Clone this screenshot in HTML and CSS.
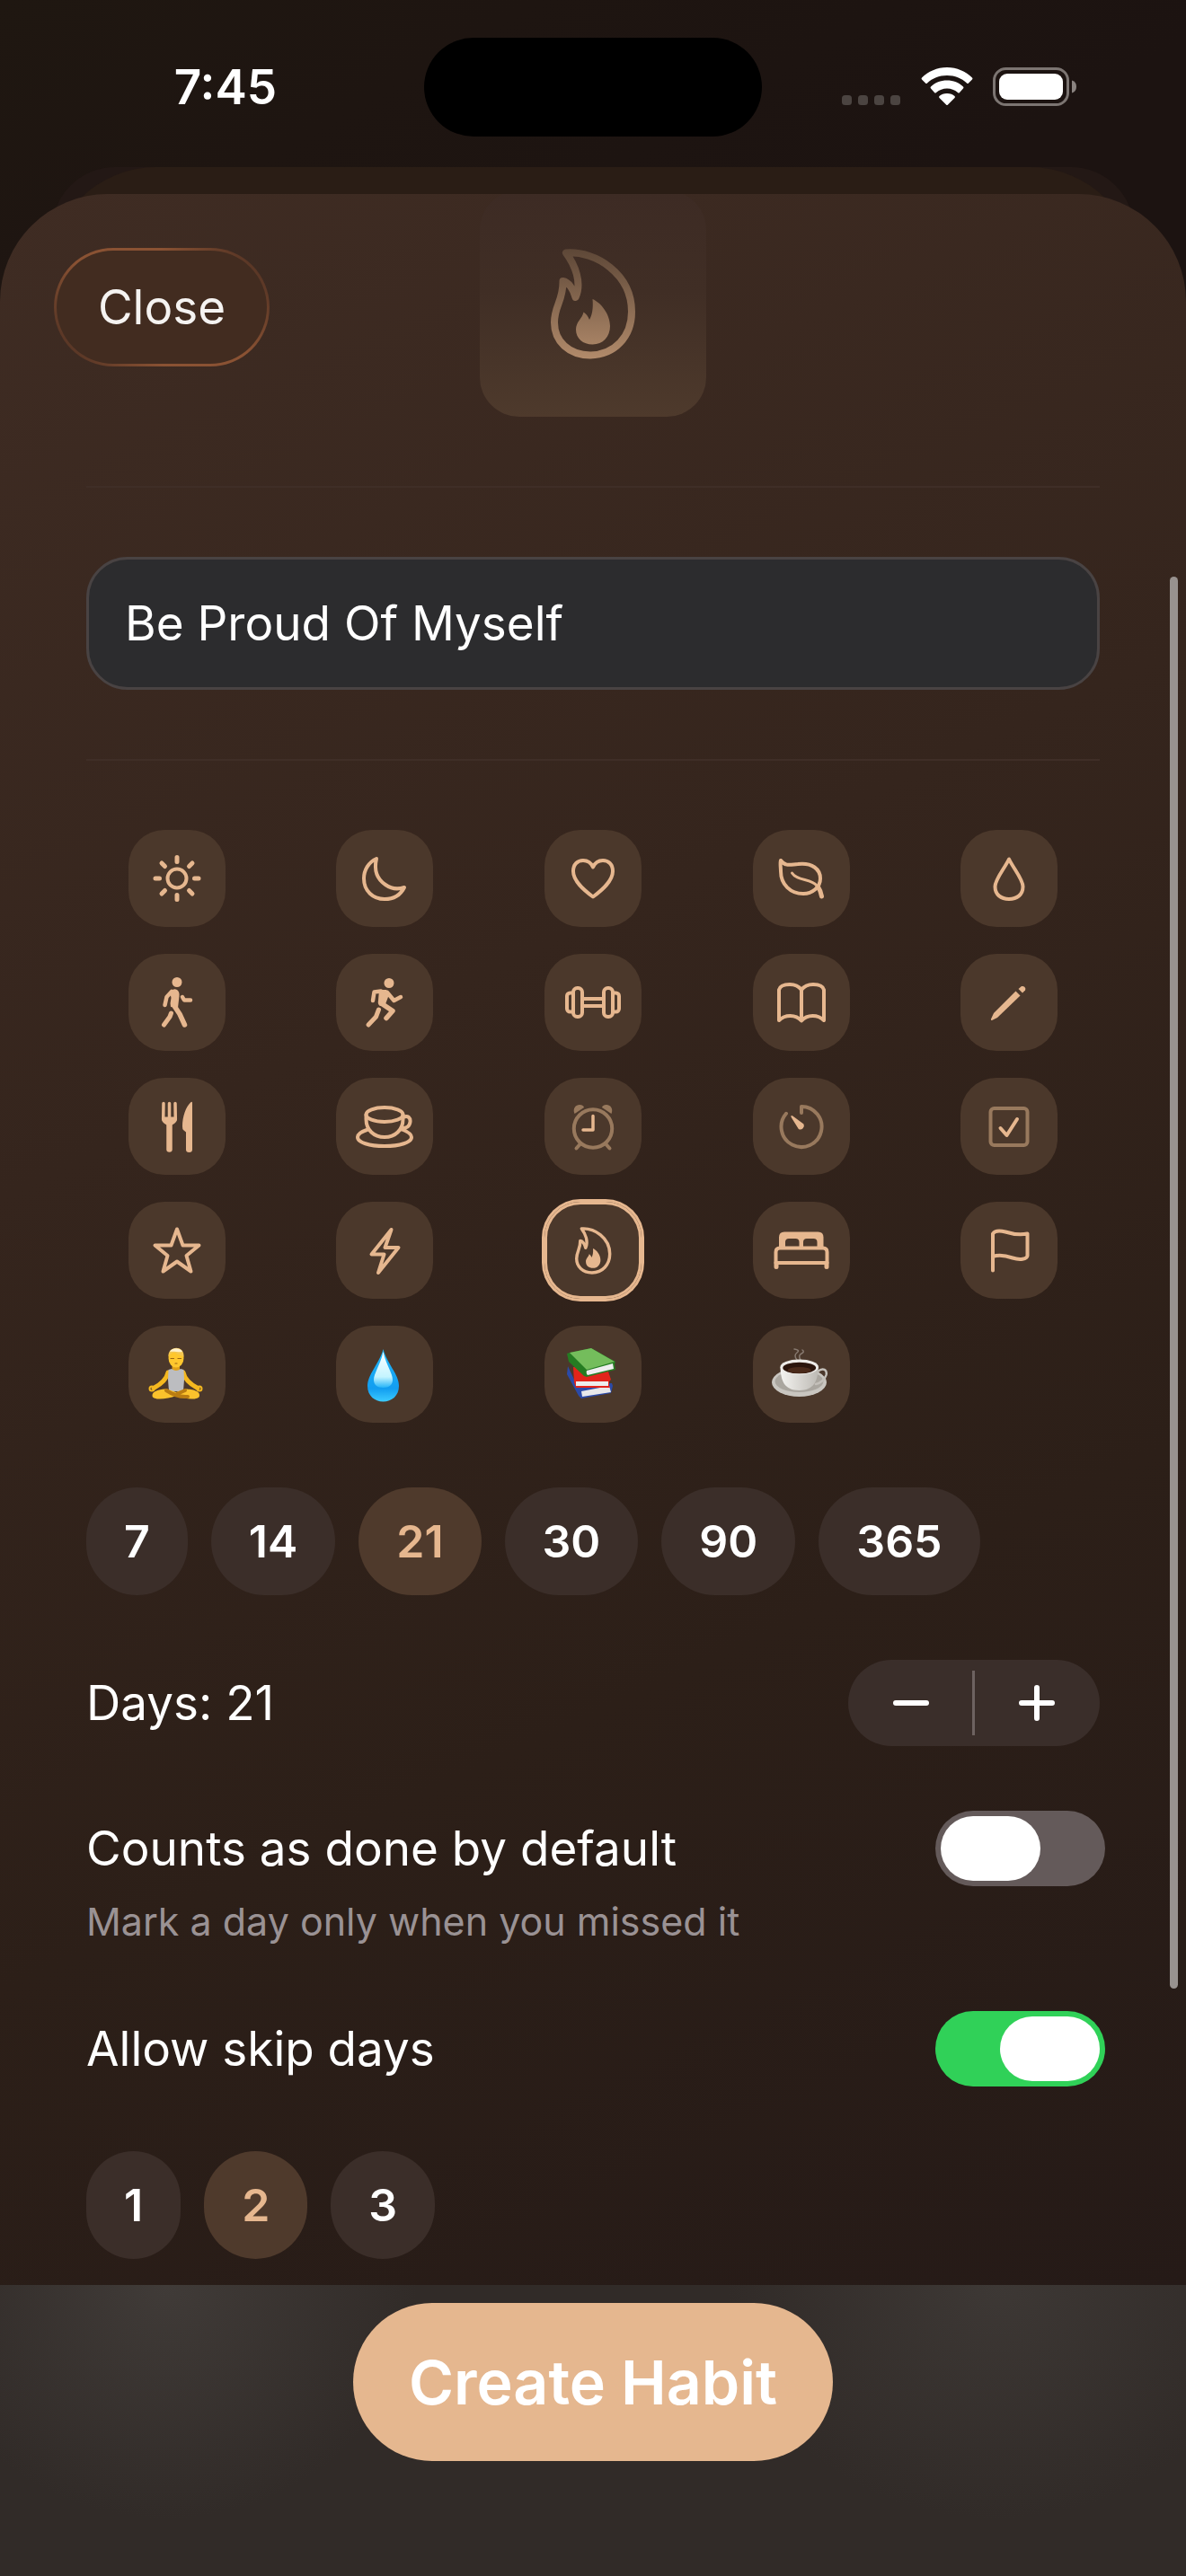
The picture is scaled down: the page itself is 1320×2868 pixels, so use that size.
FILE: index.html
```
<!DOCTYPE html>
<html lang="en">
<head>
  <meta charset="UTF-8">
  <meta name="viewport" content="width=device-width, initial-scale=1.0">
  <title>New Habit</title>
  <link rel="stylesheet" href="styles.css">
</head>
<body>
  <header class="status-bar">
    <div class="status-time">7:45</div>
    <div class="island"></div>
    <div class="status-icons">
      <svg width="66" height="44" viewBox="0 0 66 44" fill="#4b4441">
        <rect x="0" y="31" width="11" height="11" rx="3.500"/>
        <rect x="18" y="31" width="11" height="11" rx="3.500"/>
        <rect x="36" y="31" width="11" height="11" rx="3.500"/>
        <rect x="54" y="31" width="11" height="11" rx="3.500"/>
      </svg>
      <svg width="58" height="44" viewBox="0 0 58 44" fill="#fff">
        <path d="M29 0C18 0 8 4.500 1 11.500Q0 12.500 1 13.500L5 17.500Q6 18.500 7 17.500C13 12 20 9 29 9S45 12 51 17.500Q52 18.500 53 17.500L57 13.500Q58 12.500 57 11.500C50 4.500 40 0 29 0Z"/>
        <path d="M29 14.500C22 14.500 15.500 17 11 21.500Q10 22.500 11 23.500L15 28Q16 29 17 28C20.500 25 24.500 23.500 29 23.500S37.500 25 41 28Q42 29 43 28L47 23.500Q48 22.500 47 21.500C42.500 17 36 14.500 29 14.500Z"/>
        <path d="M29 29C25.500 29 22.500 30 20.500 32Q19.500 33 20.500 34L28 41.500Q29 42.500 30 41.500L37.500 34Q38.500 33 37.500 32C35.500 30 32.500 29 29 29Z"/>
      </svg>
      <svg width="94" height="44" viewBox="0 0 94 44">
        <rect x="1.500" y="1.500" width="82" height="40" rx="13" fill="none" stroke="#7c7572" stroke-width="3"/>
        <rect x="7" y="7" width="71" height="29" rx="9" fill="#fff"/>
        <path d="M88 14.500Q93 16 93 21.500T88 28.500Z" fill="#8a8380"/>
      </svg>
    </div>
  </header>

  <div class="back-sheets">
    <div class="back-sheet far"></div>
    <div class="back-sheet"></div>
  </div>

  <main class="sheet">
    <button class="close-btn" type="button">Close</button>
    <div class="scrollbar"></div>

    <div class="hero">
      <svg class="hero-icon" viewBox="0 0 94 123">
        <defs>
          <linearGradient id="fade" gradientUnits="userSpaceOnUse" x1="0" y1="0" x2="0" y2="123">
            <stop offset="0" stop-color="#5d4737"/>
            <stop offset="1" stop-color="#b28b6b"/>
          </linearGradient>
        </defs>
        <path d="M17 4.500C50 2 90 28 90 70C90 98 71 118 44 118.500C20 118 4 103 4 82C4 63 14 58 13.500 36C20 37 25 45 27.500 54C35 38 27 18 17 4.500Z" fill="none" stroke="url(#fade)" stroke-width="8" stroke-linejoin="round"/>
        <path d="M46.500 56C56 60 66 73 66 86C66 98 58 106.500 46.500 106.500C36 106.500 28 100 28 90C28 81 35 78 36.500 70.500C39 72 41.500 75 43 79C46 74 47.500 66 46.500 56Z" fill="url(#fade)"/>
      </svg>
    </div>

    <form class="form">
      <hr class="divider">
      <input class="name-input" type="text" value="Be Proud Of Myself" aria-label="Habit name">
      <hr class="divider">

      <div class="icon-grid">
        <button class="icon-btn" type="button" aria-label="Sun">
          <svg viewBox="0 0 108 108">
            <circle cx="54" cy="54" r="10.500"/>
            <path stroke-width="5" d="M54 30.500V35.500M54 72.500V77.500M30 54H34.500M73.500 54H78M37 37L40.500 40.500M67.500 67.500L71 71M71 37L67.500 40.500M40.500 67.500L37 71"/>
          </svg>
        </button>
        <button class="icon-btn" type="button" aria-label="Moon">
          <svg viewBox="0 0 108 108"><path d="M45 32C36 36 31 45 31 54C31 68 41 77 54 77C64 77 72 72 76 64C70 66 62 66 55 61C46 55 42 45 45 32Z"/></svg>
        </button>
        <button class="icon-btn" type="button" aria-label="Heart">
          <svg viewBox="0 0 108 108"><path d="M54 74.500C44 67 32 57 32 46C32 38 37 34 43 34C48 34 52 37 54 41.500C56 37 60 34 65 34C71 34 76 38 76 46C76 57 64 67 54 74.500Z"/></svg>
        </button>
        <button class="icon-btn" type="button" aria-label="Leaf">
          <svg viewBox="0 0 108 108">
            <path d="M31 34C36 41 42 38.500 50 38C66 36 75 44 75 54C75 64 66 71 56 71C42 71 31 61 31 46C31 42 30 37 31 34Z"/>
            <path stroke-width="3" d="M43.500 48C49 57 65 54 71 62"/>
            <path stroke-width="5" d="M72.500 63.500C75 67 76 71 76.500 74"/>
          </svg>
        </button>
        <button class="icon-btn" type="button" aria-label="Drop">
          <svg viewBox="0 0 108 108"><path d="M54 32.500C49 43 38.500 55 38.500 63C38.500 72 45 77 54 77C63 77 69.500 72 69.500 63C69.500 55 59 43 54 32.500Z"/></svg>
        </button>

        <button class="icon-btn" type="button" aria-label="Walk">
          <svg viewBox="0 0 108 108">
            <circle class="solid" cx="54" cy="31.500" r="5.500"/>
            <path class="solid" d="M46 42Q50 38 54 40Q57 42 56.500 47L55 60L47 59Q46 55 47.500 49Z"/>
            <path stroke-width="4.500" d="M48 42L42.500 48L40.500 57M60 48L62 51.500H69"/>
            <path stroke-width="5.500" d="M51 58L57 67L62.500 79"/>
            <path stroke-width="5" d="M47.500 66L46 70L39.500 79"/>
          </svg>
        </button>
        <button class="icon-btn" type="button" aria-label="Run">
          <svg viewBox="0 0 108 108">
            <circle class="solid" cx="59" cy="32.500" r="5.500"/>
            <path class="solid" d="M48 40H56Q60 43 58 48L55 56L49 58Q46 56 47 52Z"/>
            <path stroke-width="4.500" d="M50 41.500L42.500 42.500L41 52M57 43L64.500 52L72 48"/>
            <path stroke-width="5.500" d="M51 55.500L63 63.500L56 71.500"/>
            <path stroke-width="5" d="M47.500 62L44.500 70L36 79"/>
          </svg>
        </button>
        <button class="icon-btn" type="button" aria-label="Dumbbell">
          <svg viewBox="0 0 108 108">
            <rect x="32" y="38" width="10" height="32" rx="4.500"/>
            <rect x="66" y="38" width="10" height="32" rx="4.500"/>
            <path d="M32 43.500H28.500A3.500 3.500 0 0 0 25 47V61A3.500 3.500 0 0 0 28.500 64.500H32M76 43.500H79.500A3.500 3.500 0 0 1 83 47V61A3.500 3.500 0 0 1 79.500 64.500H76M42 50H66M42 58H66"/>
          </svg>
        </button>
        <button class="icon-btn" type="button" aria-label="Book">
          <svg viewBox="0 0 108 108"><path d="M54 40C51 36 46 34 41 34C35 34 30 36 29 40V74C32 71 37 69 41.500 69C46 69 51 71 54 74.500C57 71 62 69 66.500 69C71 69 76 71 79 74V40C78 36 73 34 67 34C62 34 57 36 54 40V74"/></svg>
        </button>
        <button class="icon-btn" type="button" aria-label="Pencil">
          <svg viewBox="0 0 108 108">
            <path class="solid" d="M34 72.500L37 66L61.500 41.500L66.500 46.500L41 71L35 74Q33.500 74 34 72.500Z"/>
            <path class="solid" d="M64.500 39L68 36Q70 35.500 71.500 37T72 40.500L69 43.500Z"/>
          </svg>
        </button>

        <button class="icon-btn" type="button" aria-label="Meal">
          <svg viewBox="0 0 108 108">
            <path stroke-width="3.500" d="M39 28.500L38.700 46M45.500 28.500V46M52 28.500L52.300 46"/>
            <path class="solid" d="M37 43.500H54V47Q53 50 48.500 52.500H42.500Q38 50 37 47Z"/>
            <path stroke-width="6.500" d="M45.500 52V79.500"/>
            <path class="solid" d="M69.500 27Q71 26 71 28V80Q71 83 67.500 83T64 80V60.500L61 58Q60 57 60 54C60 43 64 32 69.500 27Z"/>
          </svg>
        </button>
        <button class="icon-btn" type="button" aria-label="Tea">
          <svg viewBox="0 0 108 108">
            <ellipse cx="54" cy="41" rx="20.500" ry="8"/>
            <path d="M33.500 41V46C33.500 58 42 66 54 66C66 66 74.500 58 74.500 46V41M75 44C80 41 83 45 82.500 49C82 54 78 56.500 72.500 56M35.500 57.500C28 60 24 62.500 24 66C24 72 37 76 54 76C71 76 84 72 84 66C84 62.500 80 60 72.500 57"/>
          </svg>
        </button>
        <button class="icon-btn" type="button" aria-label="Alarm">
          <svg viewBox="0 0 108 108">
            <g class="dim">
              <circle cx="54" cy="56.500" r="21.200"/>
              <path d="M39.500 74L35.500 78.500M68.500 74L72.500 78.500"/>
              <path class="dim-solid" d="M33.500 40C31 34 35 30 39 30C42 30 44 31.500 44 33ZM74.500 40C77 34 73 30 69 30C66 30 64 31.500 64 33Z"/>
            </g>
            <path stroke-width="3.500" d="M54 42.500V58H43"/>
          </svg>
        </button>
        <button class="icon-btn" type="button" aria-label="Timer">
          <svg viewBox="0 0 108 108">
            <path class="dim" d="M54 39V32A22.500 22.500 0 1 1 37 39.800"/>
            <path class="solid" d="M42.500 42.200Q43.500 41.800 45 43L56.500 51.500A4.200 4.200 0 0 1 50.800 57L43 44.500Q42 43 42.500 42.200Z"/>
          </svg>
        </button>
        <button class="icon-btn" type="button" aria-label="Checkbox">
          <svg viewBox="0 0 108 108">
            <rect class="dim" x="33.500" y="34" width="41" height="41" rx="4"/>
            <path d="M44.500 56L51.500 64L63 46"/>
          </svg>
        </button>

        <button class="icon-btn" type="button" aria-label="Star">
          <svg viewBox="0 0 108 108"><path d="M54 30.500L60.500 48.500H78.500L64.500 60L69.500 77.500L54 66.500L38.500 77.500L43.500 60L29.500 48.500H47.500Z"/></svg>
        </button>
        <button class="icon-btn" type="button" aria-label="Bolt">
          <svg viewBox="0 0 108 108"><path d="M61.500 31L39.500 58.500H53.500L47 79L69.500 51H54.500Z"/></svg>
        </button>
        <button class="icon-btn selected" type="button" aria-label="Flame" aria-pressed="true">
          <svg viewBox="0 0 108 108">
            <g transform="translate(34 28) scale(.43)">
              <path stroke-width="8" d="M17 4.500C50 2 90 28 90 70C90 98 71 118 44 118.500C20 118 4 103 4 82C4 63 14 58 13.500 36C20 37 25 45 27.500 54C35 38 27 18 17 4.500Z"/>
              <path class="solid" d="M46.500 56C56 60 66 73 66 86C66 98 58 106.500 46.500 106.500C36 106.500 28 100 28 90C28 81 35 78 36.500 70.500C39 72 41.500 75 43 79C46 74 47.500 66 46.500 56Z"/>
            </g>
          </svg>
        </button>
        <button class="icon-btn" type="button" aria-label="Bed">
          <svg viewBox="0 0 108 108">
            <path class="solid" fill-rule="evenodd" d="M29 51V39.500Q29 33.500 35 33.500H72.500Q78.500 33.500 78.500 39.500V51ZM36 50H51.500V45Q51.500 41 47.500 41H40Q36 41 36 45ZM56 50H71.500V45Q71.500 41 67.500 41H60Q56 41 56 45Z"/>
            <path d="M25.500 68V56Q25.500 51.500 30 51.500H78Q82.500 51.500 82.500 56V68M25.500 68H82.500"/>
            <path stroke-width="5" d="M26 68V72.500M82 68V72.500"/>
          </svg>
        </button>
        <button class="icon-btn" type="button" aria-label="Flag">
          <svg viewBox="0 0 108 108"><path d="M36 76.500V35.500C38 32.500 44 32 50 33.500C58 36 65 37.500 74.500 35.500V60C74 64 66 65 58 62.500C49 59.500 42 59 36 61"/></svg>
        </button>

        <button class="icon-btn" type="button" aria-label="Meditation">
          <svg class="emoji" viewBox="0 0 108 108">
            <path d="M44 52Q42 62 28 69.500M61 52Q63 62 77 69.500" stroke="#f4b81f" stroke-width="5" stroke-linecap="round" fill="none"/>
            <circle cx="26" cy="70" r="2.500" fill="none" stroke="#f4b81f" stroke-width="2"/>
            <circle cx="79" cy="70" r="2.500" fill="none" stroke="#f4b81f" stroke-width="2"/>
            <path d="M48.500 41H57V50H48.500Z" fill="#e0a01a"/>
            <path d="M44.500 49L48 48Q53 52 58 48L61.500 49L62 60L61 73H45L44 60Z" fill="#bcbdc0"/>
            <path d="M26.500 78C26 72 37 70.500 43 70.500L53 74L63 70.500C69 70.500 80 72 79 78C78 83.500 63 82 53 78C43 82 27 83.500 26.500 78Z" fill="#fbc22c"/>
            <path d="M42 72Q54 80 66 79M63 72L54 76" stroke="#b97c12" fill="none"/>
            <ellipse cx="53" cy="36" rx="8.500" ry="10.500" fill="#ffc72e"/>
            <path d="M44.500 35C43 22 63 21 61.500 35C60 33 56 33 52 30C50 30 46 30 44.500 35Z" fill="#f5c750"/>
            <path d="M46 29C48 24 58 24 60 29C56 30 51 28 46 29Z" fill="#fff0cb"/>
            <path d="M47 36.500H50.500M55 36.500H58.500M52 42H54" stroke="#9a6412" stroke-width="1.200"/>
          </svg>
        </button>
        <button class="icon-btn" type="button" aria-label="Water">
          <svg class="emoji" viewBox="0 0 108 108">
            <defs>
              <linearGradient id="shine" x1="0" y1="0" x2="0" y2="1">
                <stop offset="0" stop-color="#fff"/>
                <stop offset=".7" stop-color="#c4f4ff"/>
                <stop offset="1" stop-color="#25b4f8"/>
              </linearGradient>
              <linearGradient id="water" x1="0" y1="0" x2="0" y2="1">
                <stop offset="0" stop-color="#22b7f8"/>
                <stop offset=".75" stop-color="#129df0"/>
                <stop offset="1" stop-color="#3ccbff"/>
              </linearGradient>
            </defs>
            <path d="M52.500 26C49 41 35 54 35 67C35 78 43 84.500 52.500 84.500S70 78 70 67C70 54 56 41 52.500 26Z" fill="url(#water)"/>
            <path d="M52.500 29C50 42 42 53 42 60C42 66 46 69 52.500 69S63 66 63 60C63 53 55 42 52.500 29Z" fill="url(#shine)"/>
          </svg>
        </button>
        <button class="icon-btn" type="button" aria-label="Books">
          <svg class="emoji" viewBox="0 0 108 108">
            <path d="M26 45L36 66L75 64L76 67L74 75L41 81L38 78L25 54Z" fill="#2b4aa8"/>
            <path d="M41 73L72 67L74 74L42 79Z" fill="#e8e8ea"/>
            <path d="M32 46L70 48L74 60L72 62V67L73 69H35L33 63Z" fill="#e2241b"/>
            <path d="M35 62H71V67H35Z" fill="#eceded"/>
            <path d="M25 31L27 40L44 56L47 57L79 49L78 43L79 40L52 25L28 30Z" fill="#257c22"/>
            <path d="M28 30L52 25L78 40L47 49Z" fill="#74bd5c"/>
            <path d="M47 50L76 42L77 48L48 55Q46 53 47 50Z" fill="#efefef"/>
          </svg>
        </button>
        <button class="icon-btn" type="button" aria-label="Coffee">
          <svg class="emoji" viewBox="0 0 108 108">
            <defs>
              <linearGradient id="cup" x1="0" y1="0" x2="1" y2="0">
                <stop offset="0" stop-color="#f4f3f0"/>
                <stop offset="1" stop-color="#bdbab4"/>
              </linearGradient>
            </defs>
            <path d="M49 38Q45 33 49 30T46 26M53 38Q50 33 54 31T55 27" stroke="#887a70" stroke-width="1.500" fill="none"/>
            <ellipse cx="51.500" cy="63" rx="30.500" ry="16" fill="#c9c6c0"/>
            <ellipse cx="51.500" cy="62" rx="27" ry="12" fill="#aaa69f"/>
            <path d="M72 51C78 46 83 49 81.500 55C80 60 75 64 70 65" stroke="#c4c0ba" stroke-width="2.500" fill="none"/>
            <path d="M30.500 46C31 60 34 72 51.500 72S72 60 73 46Z" fill="url(#cup)"/>
            <ellipse cx="51.700" cy="46" rx="21.300" ry="8.500" fill="#eeece8"/>
            <ellipse cx="51.700" cy="47" rx="18.500" ry="6.300" fill="#2c160d"/>
            <ellipse cx="51.700" cy="49.500" rx="13" ry="3.500" fill="#4a2a1a"/>
          </svg>
        </button>
      </div>

      <div class="chips">
        <button class="chip" type="button">7</button>
        <button class="chip" type="button">14</button>
        <button class="chip active" type="button">21</button>
        <button class="chip" type="button">30</button>
        <button class="chip" type="button">90</button>
        <button class="chip" type="button">365</button>
      </div>

      <div class="row">
        <span class="row-label">Days: 21</span>
        <div class="stepper">
          <button type="button" aria-label="Decrease days">
            <svg width="42" height="42" viewBox="0 0 42 42"><path d="M4 21H38"/></svg>
          </button>
          <button type="button" aria-label="Increase days">
            <svg width="42" height="42" viewBox="0 0 42 42"><path d="M4 21H38M21 4V38"/></svg>
          </button>
        </div>
      </div>

      <div class="setting">
        <div class="row">
          <label class="row-label" for="doneDefault">Counts as done by default</label>
          <input class="toggle" type="checkbox" id="doneDefault">
        </div>
        <p class="hint">Mark a day only when you missed it</p>
      </div>

      <div class="row">
        <label class="row-label" for="allowSkip">Allow skip days</label>
        <input class="toggle" type="checkbox" id="allowSkip" checked>
      </div>

      <div class="chips">
        <button class="chip" type="button">1</button>
        <button class="chip active" type="button">2</button>
        <button class="chip" type="button">3</button>
      </div>
    </form>
  </main>

  <footer class="bottom-bar">
    <button class="create-btn" type="button">Create Habit</button>
  </footer>
</body>
</html>
```
FILE: styles.css
```
* {
  box-sizing: border-box;
}
body {
  margin: 0;
  min-height: 100vh;
  display: flex;
  flex-direction: column;
  font-family: Inter, "Liberation Sans", sans-serif;
  color: #fff;
  background: linear-gradient(150deg, #1f1711, #1e1511 300px, #1c1311 700px);
}
button,
input {
  font-family: inherit;
  color: inherit;
  margin: 0;
}
button {
  border: none;
  padding: 0;
  cursor: pointer;
}

/* status bar */
.status-bar {
  display: grid;
  grid-template-columns: 1fr 376px 1fr;
  align-items: center;
  padding: 42px 0 34px;
}
.status-time {
  padding-left: 30px;
  text-align: center;
  font-size: 53px;
  font-weight: 600;
}
.island {
  height: 110px;
  border-radius: 55px;
  background: #000;
}
.status-icons {
  display: flex;
  justify-content: flex-end;
  gap: 22px;
  padding-right: 121px;
}

/* sheets stacked behind the front one */
.back-sheets {
  display: grid;
  margin-bottom: -100px;
}
.back-sheet {
  grid-area: 1 / 1;
  height: 130px;
  margin: 0 54px;
  border-radius: 120px 120px 0 0;
  background: #2a1d15;
}
.back-sheet.far {
  margin: 0 58px;
  border-radius: 70px 70px 0 0;
  background: #231815;
}

.sheet {
  position: relative;
  flex: 1;
  overflow: hidden;
  padding-bottom: 28px;
  border-radius: 120px 120px 0 0;
  background: linear-gradient(155deg, #3f2c23, #35251d 38%, #2c1f18 68%, #251a17);
}
.close-btn {
  position: absolute;
  top: 60px;
  left: 60px;
  width: 240px;
  height: 132px;
  border: 3px solid transparent;
  border-radius: 66px;
  font-size: 53px;
  color: #f5f3f1;
  background:
    linear-gradient(#422c20, #422c20) padding-box,
    linear-gradient(50deg, #5a3726 10%, #8a5233 35%, #8a5233 65%, #5a3726 90%) border-box;
}
.scrollbar {
  position: absolute;
  top: 426px;
  right: 9px;
  width: 9px;
  height: 1572px;
  border-radius: 5px;
  background: #98928f;
}
.hero {
  display: flex;
  align-items: center;
  justify-content: center;
  width: 252px;
  height: 252px;
  margin: -4px auto 0;
  border-radius: 44px;
  background: linear-gradient(#3d2b24, #402e25 45%, #4e3a2c);
}
.hero-icon {
  height: 123px;
}

/* form */
.form {
  display: flex;
  flex-direction: column;
  gap: 72px;
  padding: 77px 96px 0;
}
.divider {
  width: 100%;
  height: 2px;
  margin: 0 0 5px;
  border: none;
  background: #3f2e27;
}
.name-input {
  width: 100%;
  height: 148px;
  margin-bottom: 5px;
  padding: 0 40px;
  border: 3px solid #494343;
  border-radius: 46px;
  font-size: 53px;
  background: #2c2c2e;
}
.icon-grid {
  display: grid;
  grid-template-columns: repeat(5, 1fr);
  gap: 30px;
  justify-items: center;
}
.icon-btn {
  width: 108px;
  height: 108px;
  border-radius: 40px;
  background: #4b382b;
}
.icon-btn.selected {
  box-shadow: 0 0 0 3px #e6b78f, inset 0 0 0 3px #e6b78f;
}
.icon-btn svg {
  display: block;
  width: 108px;
  height: 108px;
  fill: none;
  stroke: #e6b78f;
  stroke-width: 4;
  stroke-linecap: round;
  stroke-linejoin: round;
}
.icon-btn .solid {
  fill: #e6b78f;
  stroke: none;
}
.icon-btn .dim {
  stroke: #98795d;
}
.icon-btn .dim-solid {
  fill: #98795d;
  stroke: none;
}
.icon-btn .emoji {
  stroke: none;
}

.chips {
  display: flex;
  gap: 26px;
}
.chip {
  height: 120px;
  padding: 0 42px;
  border-radius: 60px;
  font-size: 50px;
  font-weight: 600;
  background: #3b2e29;
}
.chip.active {
  color: #e6b78f;
  background: #4f3a2c;
}

.row {
  display: flex;
  align-items: center;
  justify-content: space-between;
}
.row-label {
  font-size: 53px;
  line-height: 84px;
}
.hint {
  margin: 12px 0 0;
  font-size: 43px;
  line-height: 55px;
  color: #9a9294;
}
.stepper {
  display: flex;
  height: 96px;
  border-radius: 48px;
  background: #3a2e2a;
}
.stepper button {
  display: flex;
  align-items: center;
  justify-content: center;
  position: relative;
  width: 140px;
  background: none;
}
.stepper button + button::before {
  content: "";
  position: absolute;
  left: -2px;
  top: 12px;
  bottom: 12px;
  width: 3px;
  background: #6d6260;
}
.stepper svg {
  stroke: #fff;
  stroke-width: 6;
  stroke-linecap: round;
}
.toggle {
  appearance: none;
  width: 189px;
  height: 84px;
  margin-right: -6px;
  padding: 6px;
  border-radius: 42px;
  background: #645a5a;
  cursor: pointer;
}
.toggle::before {
  content: "";
  display: block;
  width: 111px;
  height: 72px;
  border-radius: 36px;
  background: #fff;
}
.toggle:checked {
  background: #30d158;
}
.toggle:checked::before {
  margin-left: auto;
}

.bottom-bar {
  display: flex;
  justify-content: center;
  padding: 20px 0 128px;
  background:
    radial-gradient(280px 260px at 14% 0, #403b38, transparent),
    radial-gradient(300px 260px at 84% 0, #3d3835, transparent),
    #312b28;
}
.create-btn {
  height: 176px;
  padding: 0 62px;
  border-radius: 88px;
  font-size: 68px;
  font-weight: 600;
  background: #e5b78f;
}
```
